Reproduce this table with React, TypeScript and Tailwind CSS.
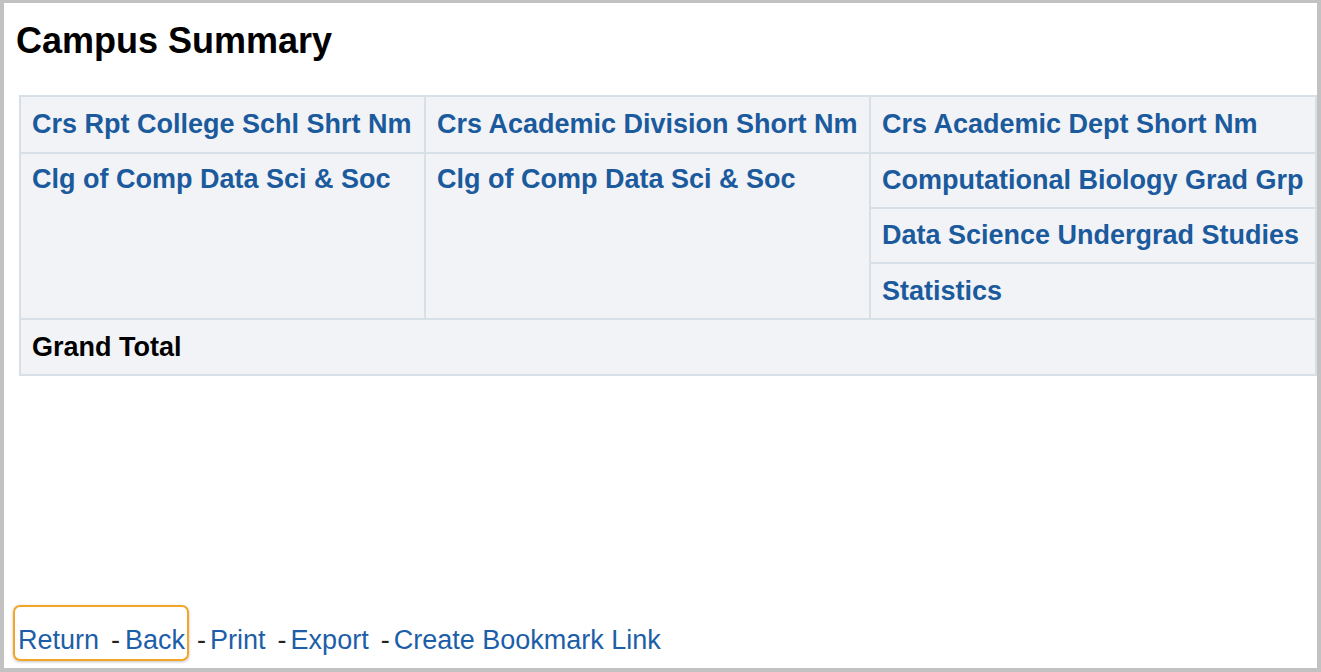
export default function App() {
  const cell = "border-2 border-[#d8e0e7] bg-[#f1f3f6] pl-[11px] pr-2 align-middle";
  const blue = "text-[#1b5a9c] font-bold";

  return (
    <div
      className="flex h-[672px] w-[1321px] flex-col overflow-hidden border-t-[3px] border-r-[4px] border-b-[4px] border-l-[4px] border-[#c2c2c2] bg-white"
      style={{ fontFamily: '"Liberation Sans", Arial, sans-serif' }}
    >
      <h1 className="ml-[12px] mt-[17px] text-[36px] font-bold leading-[41px] text-black">Campus Summary</h1>

      <table className="ml-[15px] mt-[34px] w-[1296px] table-fixed border-collapse text-[27px] leading-[31px]">
        <colgroup>
          <col className="w-[405px]" />
          <col className="w-[445px]" />
          <col className="w-[446px]" />
        </colgroup>
        <tbody>
          <tr className="h-[57px]">
            <td className={`${cell} ${blue}`}>Crs Rpt College Schl Shrt Nm</td>
            <td className={`${cell} ${blue}`}>Crs Academic Division Short Nm</td>
            <td className={`${cell} ${blue}`}>Crs Academic Dept Short Nm</td>
          </tr>
          <tr className="h-[55px]">
            <td rowSpan={3} className={`${cell} ${blue} !align-top pt-[10px]`}>Clg of Comp Data Sci &amp; Soc</td>
            <td rowSpan={3} className={`${cell} ${blue} !align-top pt-[10px]`}>Clg of Comp Data Sci &amp; Soc</td>
            <td className={`${cell} ${blue}`}>Computational Biology Grad Grp</td>
          </tr>
          <tr className="h-[55px]">
            <td className={`${cell} ${blue}`}>Data Science Undergrad Studies</td>
          </tr>
          <tr className="h-[56px]">
            <td className={`${cell} ${blue}`}>Statistics</td>
          </tr>
          <tr className="h-[56px]">
            <td colSpan={3} className={`${cell} font-bold text-black`}>Grand Total</td>
          </tr>
        </tbody>
      </table>

      {/* footer links */}
      <div className="relative mt-auto mb-[12px] ml-[14px] flex items-baseline text-[27px] leading-[31px] text-[#222]">
        <div className="pointer-events-none absolute left-[-5px] top-[-20px] h-[56px] w-[176px] rounded-[7px] border-2 border-[#f2a526] shadow-[0_1px_3px_rgba(0,0,0,0.25)]" />
        <a className="text-[#1d5ea8]">Return</a>
        <span className="ml-[12px]">-</span>
        <a className="ml-[5px] text-[#1d5ea8]">Back</a>
        <span className="ml-[12px]">-</span>
        <a className="ml-[4px] text-[#1d5ea8]">Print</a>
        <span className="ml-[12px]">-</span>
        <a className="ml-[4px] text-[#1d5ea8]">Export</a>
        <span className="ml-[12px]">-</span>
        <a className="ml-[4px] text-[#1d5ea8]">Create Bookmark Link</a>
      </div>
    </div>
  );
}
